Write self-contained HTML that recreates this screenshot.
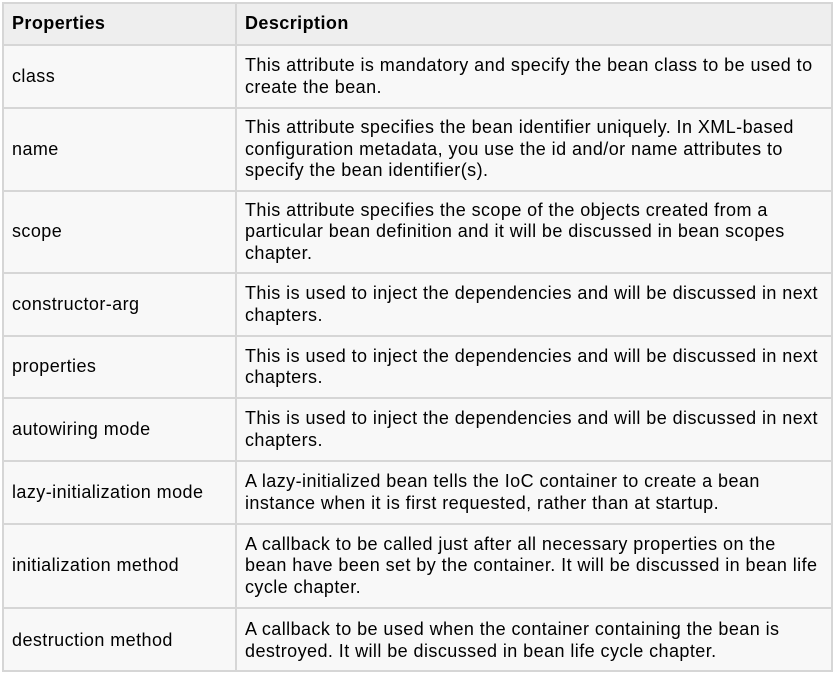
<!DOCTYPE html>
<html><head><style>
body{margin:0;background:#fff;width:835px;height:673px;overflow:hidden;font-family:"Liberation Sans",Arial,sans-serif;font-size:18px;letter-spacing:0.43px;color:#000}
.t{position:absolute;left:2px;top:2px;width:827px;height:666px;border:2px solid #d6d6d6;background:#f8f8f8}
.r{position:absolute;left:0;width:827px;border-top:2px solid #d6d6d6;display:flex}
.r:first-child{border-top:none}
.a,.b{display:flex;align-items:center;line-height:21.5px;white-space:nowrap}
.a{width:223px;padding-left:8px;border-right:2px solid #d6d6d6}
.b{padding-left:8px;width:580px}
.h{background:#eeeeee;font-weight:bold}
</style></head><body>
<div class="t">
<div class="r h" style="top:0;height:40px"><div class="a">Properties</div><div class="b">Description</div></div>
<div class="r" style="top:40px;height:61px"><div class="a">class</div><div class="b"><span>This attribute is mandatory and specify the bean class to be used to<br>create the bean.</span></div></div>
<div class="r" style="top:103px;height:81px"><div class="a">name</div><div class="b"><span>This attribute specifies the bean identifier uniquely. In XML-based<br>configuration metadata, you use the id and/or name attributes to<br>specify the bean identifier(s).</span></div></div>
<div class="r" style="top:186px;height:80px"><div class="a">scope</div><div class="b"><span>This attribute specifies the scope of the objects created from a<br>particular bean definition and it will be discussed in bean scopes<br>chapter.</span></div></div>
<div class="r" style="top:268px;height:61px"><div class="a">constructor-arg</div><div class="b"><span>This is used to inject the dependencies and will be discussed in next<br>chapters.</span></div></div>
<div class="r" style="top:331px;height:60px"><div class="a">properties</div><div class="b"><span>This is used to inject the dependencies and will be discussed in next<br>chapters.</span></div></div>
<div class="r" style="top:393px;height:61px"><div class="a">autowiring mode</div><div class="b"><span>This is used to inject the dependencies and will be discussed in next<br>chapters.</span></div></div>
<div class="r" style="top:456px;height:61px"><div class="a">lazy-initialization mode</div><div class="b"><span>A lazy-initialized bean tells the IoC container to create a bean<br>instance when it is first requested, rather than at startup.</span></div></div>
<div class="r" style="top:519px;height:82px"><div class="a">initialization method</div><div class="b"><span>A callback to be called just after all necessary properties on the<br>bean have been set by the container. It will be discussed in bean life<br>cycle chapter.</span></div></div>
<div class="r" style="top:603px;height:63px"><div class="a">destruction method</div><div class="b"><span>A callback to be used when the container containing the bean is<br>destroyed. It will be discussed in bean life cycle chapter.</span></div></div>
</div>
</body></html>
